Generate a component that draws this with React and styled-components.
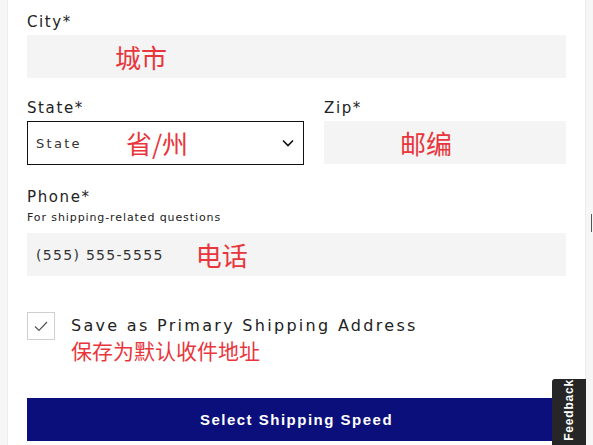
import React from "react";
import styled, { createGlobalStyle } from "styled-components";

const GlobalStyle = createGlobalStyle`
  html, body {
    margin: 0;
    padding: 0;
    background: #f6f6f6;
    height: 445px;
    overflow: hidden;
  }
`;

const Page = styled.div`
  position: relative;
  height: 445px;
  padding: 0 7px;
`;

const Panel = styled.div`
  background: #fff;
  border-left: 1px solid #ececec;
  border-right: 1px solid #ececec;
  height: 445px;
  box-sizing: border-box;
  padding: 12px 19px 0 19px;
  font-family: "DejaVu Sans", "Noto Sans CJK SC", sans-serif;
  color: #222;
`;

const Field = styled.div`
  display: flex;
  flex-direction: column;
  margin-bottom: ${(p) => p.gap || 0}px;
`;

const Row = styled.div`
  display: grid;
  grid-template-columns: 277px 1fr;
  column-gap: 20px;
  margin-bottom: 22px;
`;

const Label = styled.label`
  font-size: 15px;
  letter-spacing: 1.6px;
  line-height: 20px;
  color: #222;
  margin-bottom: 3px;
`;

const Hint = styled.div`
  font-size: 11px;
  letter-spacing: 0.9px;
  line-height: 14px;
  color: #222;
  margin: 1px 0 8px;
`;

const Input = styled.div`
  display: flex;
  align-items: center;
  height: 43px;
  box-sizing: border-box;
  background: #f4f4f4;
  padding-left: ${(p) => p.indent || 9}px;
`;

const Select = styled.div`
  display: flex;
  align-items: center;
  height: 44px;
  box-sizing: border-box;
  border: 1px solid #111;
  padding: 0 8px 0 8px;
`;

const Value = styled.span`
  font-size: ${(p) => p.size || 13}px;
  letter-spacing: ${(p) => p.spacing || 2.3}px;
  color: #333;
  margin-right: ${(p) => p.after || 0}px;
`;

const Note = styled.span`
  font-family: "Noto Sans CJK SC", sans-serif;
  font-size: ${(p) => p.size || 26}px;
  line-height: 1;
  color: #e8363c;
  margin-top: ${(p) => p.top || 0}px;
`;

const Chevron = styled.svg`
  margin-left: auto;
  width: 14px;
  height: 14px;
`;

const CheckRow = styled.div`
  display: flex;
  align-items: flex-start;
  gap: 16px;
  margin: 36px 0 37px;
`;

const Box = styled.div`
  width: 28px;
  height: 28px;
  box-sizing: border-box;
  border: 1px solid #cfcfcf;
  display: flex;
  align-items: center;
  justify-content: center;
  flex: none;
`;

const CheckText = styled.div`
  display: flex;
  flex-direction: column;
  padding-top: 4px;
`;

const CheckLabel = styled.span`
  font-size: 16px;
  letter-spacing: 2.3px;
  line-height: 20px;
  color: #222;
`;

const Button = styled.button`
  width: 100%;
  height: 43px;
  border: none;
  background: #0b0f7b;
  color: #fff;
  font-family: "Liberation Sans", sans-serif;
  font-weight: 700;
  font-size: 15px;
  letter-spacing: 1.5px;
  cursor: pointer;
`;

const FeedbackTab = styled.div`
  position: absolute;
  right: 7px;
  top: 379px;
  width: 34px;
  height: 66px;
  background: #262626;
  border-radius: 3px 0 0 0;
  display: flex;
  align-items: flex-end;
  justify-content: center;
  overflow: hidden;
`;

const FeedbackText = styled.span`
  writing-mode: vertical-rl;
  transform: rotate(180deg);
  font-family: "Liberation Sans", sans-serif;
  font-weight: 700;
  font-size: 12px;
  letter-spacing: 0.8px;
  color: #fff;
  padding-top: 4px;
`;

const ScrollMark = styled.div`
  position: absolute;
  right: 1px;
  top: 214px;
  width: 1px;
  height: 18px;
  background: #555;
`;

export default function App() {
  return (
    <>
      <GlobalStyle />
      <Page>
        <Panel>
          <Field gap={20}>
            <Label>City*</Label>
            <Input indent={88}>
              <Note>城市</Note>
            </Input>
          </Field>
          <Row>
            <Field>
              <Label>State*</Label>
              <Select>
                <Value after={44}>State</Value>
                <Note>省/州</Note>
                <Chevron viewBox="0 0 14 14">
                  <path d="M2 4.5 L7 9.5 L12 4.5" fill="none" stroke="#111" strokeWidth="1.6" />
                </Chevron>
              </Select>
            </Field>
            <Field>
              <Label>Zip*</Label>
              <Input indent={76}>
                <Note>邮编</Note>
              </Input>
            </Field>
          </Row>
          <Field>
            <Label>Phone*</Label>
            <Hint>For shipping-related questions</Hint>
            <Input>
              <Value size={14} spacing={1.3} after={32}>
                (555) 555-5555
              </Value>
              <Note>电话</Note>
            </Input>
          </Field>
          <CheckRow>
            <Box>
              <svg width="16" height="16" viewBox="0 0 16 16">
                <path d="M2 8.5 L6 12.5 L14 4" fill="none" stroke="#555" strokeWidth="1.2" />
              </svg>
            </Box>
            <CheckText>
              <CheckLabel>Save as Primary Shipping Address</CheckLabel>
              <Note size={21} top={4}>保存为默认收件地址</Note>
            </CheckText>
          </CheckRow>
          <Button>Select Shipping Speed</Button>
        </Panel>
        <FeedbackTab>
          <FeedbackText>Feedback</FeedbackText>
        </FeedbackTab>
        <ScrollMark />
      </Page>
    </>
  );
}
